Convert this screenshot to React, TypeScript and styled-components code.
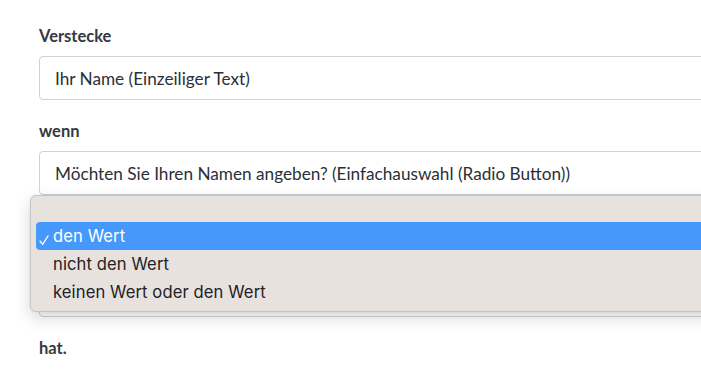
import React from 'react'
import styled, { createGlobalStyle } from 'styled-components'

const GlobalStyle = createGlobalStyle`
  html, body {
    margin: 0;
    padding: 0;
    background: #ffffff;
    overflow: hidden;
  }
  body {
    font-family: Lato, "Open Sans", sans-serif;
  }
`

const Page = styled.div`
  position: relative;
  width: 701px;
  height: 385px;
  overflow: hidden;
`

const Form = styled.form`
  width: 860px;
  padding: 26px 0 0 39px;
  box-sizing: border-box;
  display: flex;
  flex-direction: column;
`

const Group = styled.div<{ $offset?: number }>`
  margin-top: ${(p) => p.$offset ?? 0}px;
  margin-bottom: 21px;
`

const Label = styled.div`
  font-size: 16.5px;
  line-height: 20px;
  font-weight: 700;
  color: #343941;
  margin-bottom: 10px;
`

const Field = styled.div`
  height: 44px;
  box-sizing: border-box;
  border: 1px solid #cdd1d8;
  border-radius: 4px;
  padding: 0 15px;
  display: flex;
  align-items: center;
  font-size: 17.2px;
  color: #2b2f38;
  background: #fff;
`

const Popup = styled.div`
  position: absolute;
  left: 30px;
  top: 195px;
  width: 720px;
  box-sizing: border-box;
  padding: 26px 5px 5px;
  background: #e8e2df;
  border: 1px solid #c9c4c1;
  border-radius: 6px;
  box-shadow: 0 6px 16px rgba(0, 0, 0, 0.16), 0 0 2px rgba(0, 0, 0, 0.08);
  font-family: Inter, "Liberation Sans", sans-serif;
`

const Option = styled.div<{ $active?: boolean }>`
  height: 28px;
  display: flex;
  align-items: center;
  padding-left: 17px;
  position: relative;
  font-size: 16.6px;
  letter-spacing: 0.1px;
  color: ${(p) => (p.$active ? '#ffffff' : '#23211f')};
  background: ${(p) => (p.$active ? '#4798fd' : 'transparent')};
  border-radius: ${(p) => (p.$active ? '4px 0 0 4px' : '0')};
`

const Check = styled.span`
  position: absolute;
  left: 3px;
  top: 8px;
  width: 10px;
  height: 11px;
`

const options = ['den Wert', 'nicht den Wert', 'keinen Wert oder den Wert']

export default function App() {
  return (
    <Page>
      <GlobalStyle />
      <Form>
        <Group>
          <Label>Verstecke</Label>
          <Field>Ihr Name (Einzeiliger Text)</Field>
        </Group>
        <Group>
          <Label>wenn</Label>
          <Field>Möchten Sie Ihren Namen angeben? (Einfachauswahl (Radio Button))</Field>
        </Group>
        {/* the select whose popup is open; only its bottom edge shows */}
        <Group $offset={57}>
          <Field />
        </Group>
        <Group>
          <Label>hat.</Label>
        </Group>
      </Form>
      <Popup>
        {options.map((o, i) => (
          <Option key={o} $active={i === 0}>
            {i === 0 && (
              <Check>
                <svg width="10" height="11" viewBox="0 0 10 11">
                  <path d="M1 6 L3.6 9.4 L9 1" fill="none" stroke="#fff" strokeWidth="1.3" strokeLinecap="round" strokeLinejoin="round" />
                </svg>
              </Check>
            )}
            {o}
          </Option>
        ))}
      </Popup>
    </Page>
  )
}
